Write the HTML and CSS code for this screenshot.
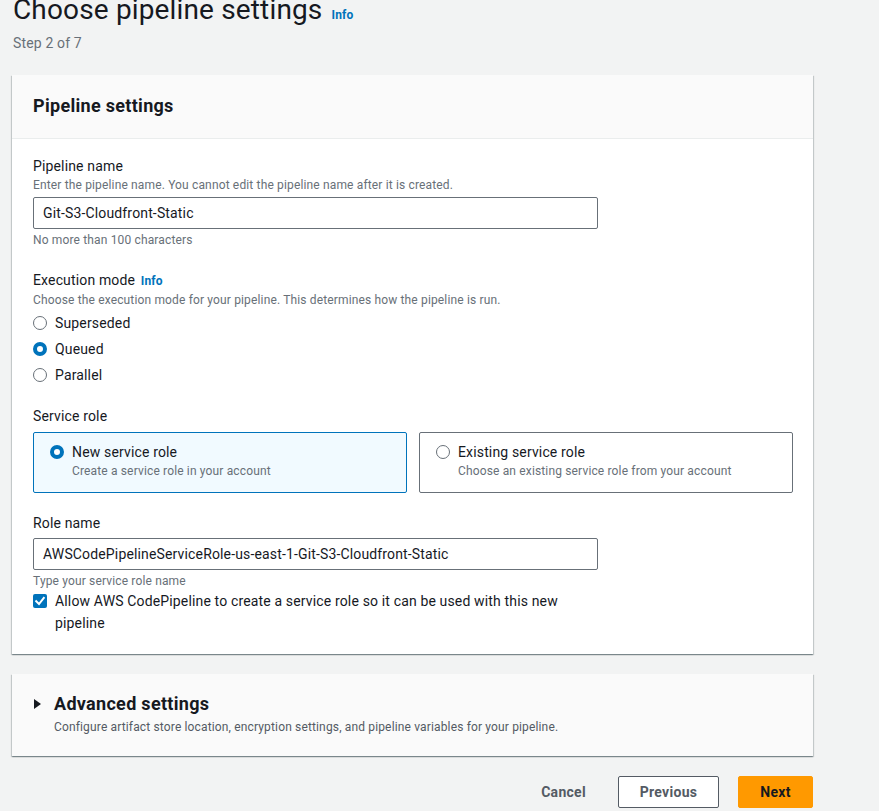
FILE: index.html
```html
<!DOCTYPE html>
<html lang="en">
<head>
<meta charset="utf-8">
<title>Choose pipeline settings</title>
<link rel="stylesheet" href="styles.css">
</head>
<body>
<div class="page">
  <div class="page-head">
    <h1 class="title">Choose pipeline settings <a class="info" href="#">Info</a></h1>
    <div class="step">Step 2 of 7</div>
  </div>

  <section class="card">
    <div class="card-header"><h2 class="card-title">Pipeline settings</h2></div>
    <div class="card-body">
      <div class="field">
        <div class="label">Pipeline name</div>
        <div class="desc">Enter the pipeline name. You cannot edit the pipeline name after it is created.</div>
        <div class="input">Git-S3-Cloudfront-Static</div>
        <div class="hint">No more than 100 characters</div>
      </div>

      <div class="field field-gap">
        <div class="label">Execution mode <a class="info" href="#">Info</a></div>
        <div class="desc">Choose the execution mode for your pipeline. This determines how the pipeline is run.</div>
        <div class="radios">
          <div class="radio-row"><span class="radio"></span><span>Superseded</span></div>
          <div class="radio-row"><span class="radio checked"></span><span>Queued</span></div>
          <div class="radio-row"><span class="radio"></span><span>Parallel</span></div>
        </div>
      </div>

      <div class="field field-gap-sm">
        <div class="label">Service role</div>
        <div class="tiles">
          <div class="tile selected">
            <span class="radio checked tile-radio"></span>
            <div>
              <div class="tile-title">New service role</div>
              <div class="tile-desc">Create a service role in your account</div>
            </div>
          </div>
          <div class="tile">
            <span class="radio tile-radio"></span>
            <div>
              <div class="tile-title">Existing service role</div>
              <div class="tile-desc">Choose an existing service role from your account</div>
            </div>
          </div>
        </div>
      </div>

      <div class="field field-gap-sm">
        <div class="label">Role name</div>
        <div class="input input-role">AWSCodePipelineServiceRole-us-east-1-Git-S3-Cloudfront-Static</div>
        <div class="hint">Type your service role name</div>
        <div class="check-row">
          <span class="checkbox"><svg viewBox="0 0 14 14" width="14" height="14"><path d="M3.2 7.2 L6 10 L10.8 4" fill="none" stroke="#fff" stroke-width="2" stroke-linecap="square"/></svg></span>
          <span>Allow AWS CodePipeline to create a service role so it can be used with this new pipeline</span>
        </div>
      </div>
    </div>
  </section>

  <section class="card adv">
    <div class="adv-head">
      <span class="caret"></span>
      <h2 class="card-title">Advanced settings</h2>
    </div>
    <div class="adv-desc">Configure artifact store location, encryption settings, and pipeline variables for your pipeline.</div>
  </section>

  <div class="actions">
    <button class="btn btn-link">Cancel</button>
    <button class="btn btn-normal">Previous</button>
    <button class="btn btn-primary">Next</button>
  </div>
</div>
</body>
</html>
```

FILE: styles.css
```css
* { box-sizing: border-box; }
html, body { margin: 0; padding: 0; }
body {
  background: #f2f3f3;
  font-family: Roboto, "Noto Sans", "Liberation Sans", sans-serif;
  color: #16191f;
  font-size: 14px;
  line-height: 22px;
  letter-spacing: 0.15px;
  overflow: hidden;
}
.page {
  width: 813px;
  padding-left: 12px;
}
.page-head { padding-left: 1px; }
.title {
  margin: -8px 0 0;
  font-size: 28px;
  line-height: 36px;
  font-weight: 400;
  color: #16191f;
}
.info {
  font-size: 12px;
  font-weight: 700;
  color: #0073bb;
  text-decoration: none;
  margin-left: 2px;
}
.step {
  margin-top: -1px;
  font-size: 14px;
  line-height: 22px;
  color: #687078;
}
.card {
  background: #fff;
  box-shadow: 0 1px 1px 0 rgba(0,28,36,.3), 1px 1px 1px 0 rgba(0,28,36,.15), -1px 1px 1px 0 rgba(0,28,36,.15);
}
.page-head + .card { margin-top: 21px; }
.card-header {
  background: #fafafa;
  border-bottom: 1px solid #eaeded;
  padding: 20px 21px 21px;
}
.card-title {
  margin: 0;
  font-size: 18px;
  line-height: 22px;
  font-weight: 700;
  letter-spacing: 0.3px;
}
.card-body {
  padding: 16px 21px 20px;
}
.label { font-size: 14px; line-height: 22px; }
.desc, .hint {
  font-size: 12px;
  line-height: 16px;
  color: #687078;
}
.input {
  margin-top: 4px;
  width: 565px;
  height: 32px;
  border: 1px solid #687078;
  border-radius: 2px;
  padding: 0 9px;
  font-size: 14px;
  line-height: 30px;
  background: #fff;
}
.hint { margin-top: 3px; }
.field-gap { margin-top: 21px; }
.field-gap-sm { margin-top: 19px; }
.radios {
  margin-top: 4px;
  display: flex;
  flex-direction: column;
  gap: 4px;
}
.radio-row {
  display: flex;
  align-items: center;
  gap: 8px;
}
.radio {
  flex: none;
  width: 14px;
  height: 14px;
  border-radius: 50%;
  border: 1.5px solid #687078;
  background: #fff;
}
.radio.checked {
  border: 4px solid #0073bb;
}
.tiles {
  margin-top: 5px;
  display: grid;
  grid-template-columns: 374px 374px;
  gap: 12px;
}
.tile {
  display: flex;
  gap: 8px;
  border: 1px solid #687078;
  border-radius: 2px;
  padding: 8px 16px 12px;
  height: 61px;
}
.tile.selected {
  background: #f1faff;
  border-color: #0073bb;
}
.tile-radio { margin-top: 4px; }
.tile-title { font-size: 14px; line-height: 22px; }
.tile-desc { font-size: 12px; line-height: 16px; color: #687078; }
.input-role { margin-top: 4px; }
.check-row {
  margin-top: 1px;
  display: flex;
  gap: 8px;
  width: 565px;
  font-size: 14px;
  line-height: 22px;
}
.checkbox {
  flex: none;
  width: 14px;
  height: 14px;
  margin-top: 4px;
  background: #0073bb;
  border-radius: 2px;
  display: flex;
}
.adv {
  margin-top: 20px;
  background: #fafafa;
  padding: 19px 21px 21px;
}
.adv-head {
  display: flex;
  align-items: center;
  gap: 13px;
  padding-left: 1px;
}
.caret {
  width: 0;
  height: 0;
  border-top: 5px solid transparent;
  border-bottom: 5px solid transparent;
  border-left: 7px solid #16191f;
}
.adv-desc {
  margin-top: 4px;
  padding-left: 21px;
  font-size: 12px;
  line-height: 16px;
  color: #545b64;
}
.actions {
  margin-top: 20px;
  display: flex;
  justify-content: flex-end;
  align-items: center;
}
.btn {
  font-family: inherit;
  font-size: 14px;
  font-weight: 700;
  line-height: 20px;
  letter-spacing: 0.3px;
  height: 32px;
  border-radius: 2px;
  cursor: pointer;
}
.btn-link {
  background: transparent;
  border: 1px solid transparent;
  color: #545b64;
  padding: 0 20px;
  margin-right: 11px;
}
.btn-normal {
  background: #fff;
  border: 1px solid #545b64;
  color: #545b64;
  width: 101px;
  margin-right: 19px;
}
.btn-primary {
  background: #ff9900;
  border: 1px solid #ff9900;
  color: #16191f;
  width: 75px;
}
```
